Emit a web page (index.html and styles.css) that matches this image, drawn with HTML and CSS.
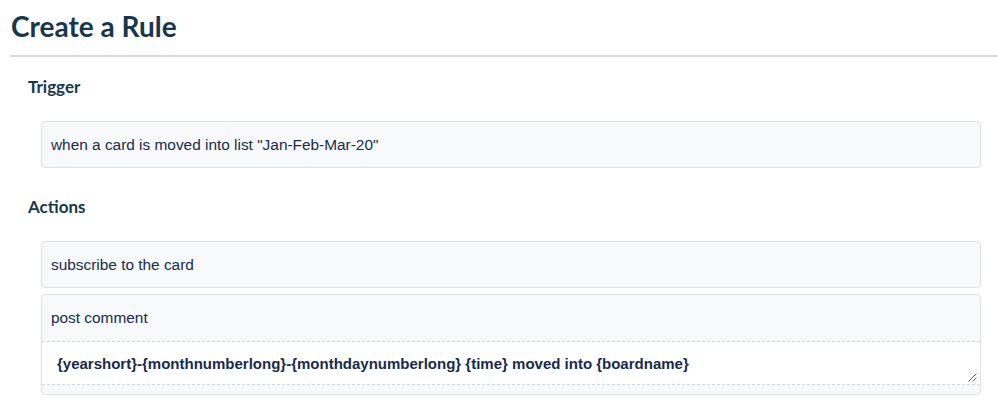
FILE: index.html
```html
<!DOCTYPE html>
<html>
<head>
<meta charset="utf-8">
<link rel="stylesheet" href="styles.css">
</head>
<body>
<div class="page">
  <h1 class="title">Create a Rule</h1>
  <section class="section">
    <h2 class="label">Trigger</h2>
    <div class="box"><div class="box-text">when a card is moved into list "Jan-Feb-Mar-20"</div></div>
  </section>
  <section class="section">
    <h2 class="label">Actions</h2>
    <div class="box"><div class="box-text">subscribe to the card</div></div>
    <div class="box">
      <div class="box-text box-text-tall">post comment</div>
      <div class="comment">
        <div class="comment-text">{yearshort}-{monthnumberlong}-{monthdaynumberlong} {time} moved into {boardname}</div>
        <svg class="grip" width="10" height="10" viewBox="0 0 10 10"><path d="M9.5 1.5L1.5 9.5M9.5 5.5L5.5 9.5" stroke="#666" stroke-width="1" fill="none"/></svg>
      </div>
    </div>
  </section>
</div>
</body>
</html>
```
FILE: styles.css
```css
* { box-sizing: border-box; }
body { margin: 0; background: #fff; }
.page { padding-left: 10px; padding-top: 5px; }
.title {
  margin: 0;
  padding-left: 1px;
  font-family: Lato, sans-serif;
  font-weight: 700;
  font-size: 28px;
  line-height: 42px;
  color: #17384c;
  padding-bottom: 8px;
  border-bottom: 2px solid #d8d8d8;
}
.section { padding-left: 18px; padding-right: 17px; }
.section + .section { padding-top: 3px; }
.label {
  margin: 0;
  font-family: Lato, sans-serif;
  font-weight: 700;
  font-size: 17px;
  line-height: 20px;
  color: #17384c;
  padding-top: 20px;
  padding-bottom: 24px;
}
.box {
  margin-left: 13px;
  background: #f8f9fb;
  border: 1px solid #dfe1e6;
  border-radius: 4px;
  margin-bottom: 6px;
  font-family: "Liberation Sans", Arial, sans-serif;
  color: #172b4d;
}
.box-text {
  font-size: 15.4px;
  line-height: 45px;
  padding-left: 9px;
}
.box-text-tall { line-height: 46px; }
.comment {
  display: flex;
  align-items: center;
  background: #fff;
  border-top: 1px dashed #d4d6da;
  border-bottom: 1px dashed #d4d6da;
  height: 44px;
  margin-bottom: 9px;
  position: relative;
}
.comment-text {
  padding-left: 15px;
  font-size: 15px;
  font-weight: 700;
  color: #172b4d;
}
.grip { position: absolute; right: 3px; bottom: 2px; }
```
